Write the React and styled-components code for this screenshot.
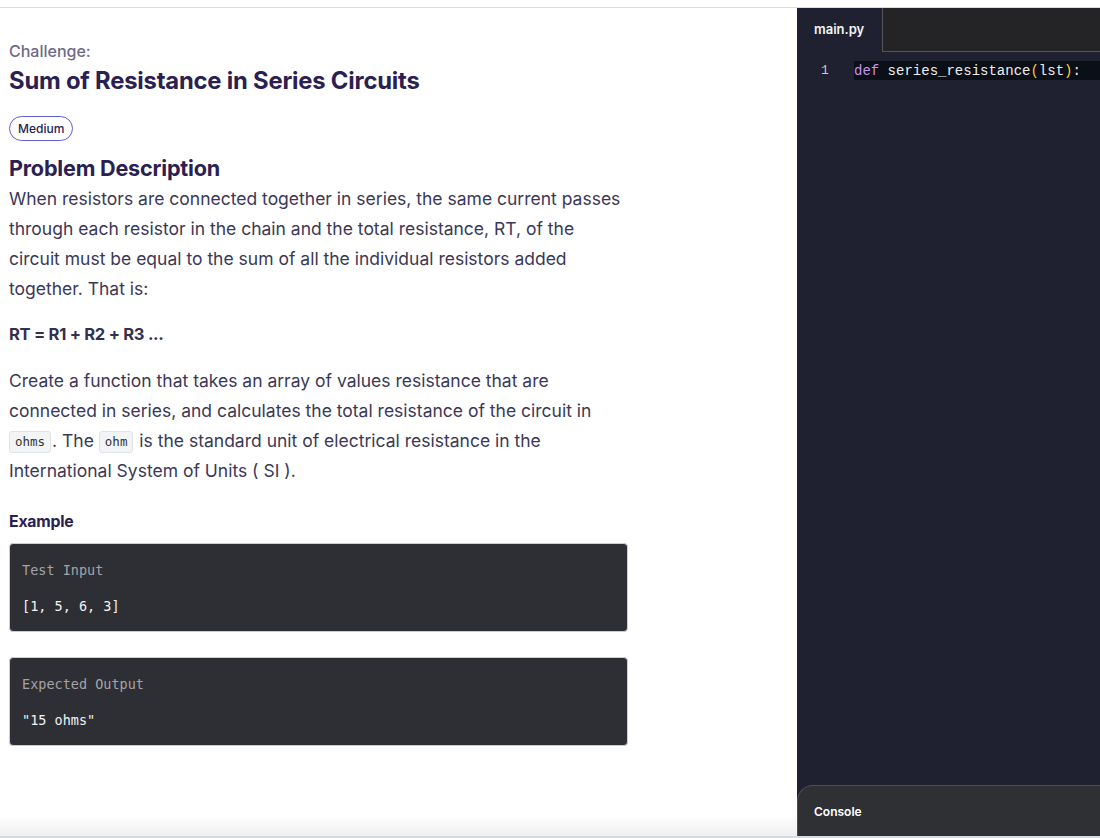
import React from "react";
import styled, { createGlobalStyle } from "styled-components";

const Global = createGlobalStyle`
  html, body { margin: 0; padding: 0; background: #fff; }
  body { font-family: Inter, "Noto Sans", sans-serif; }
  * { box-sizing: border-box; }
`;

const Page = styled.div`
  width: 1100px;
  height: 838px;
  display: flex;
  flex-direction: column;
  overflow: hidden;
`;

const TopStrip = styled.div`
  height: 8px;
  flex: none;
  border-bottom: 1px solid #d7dde3;
  background: #fff;
`;

const Main = styled.div`
  flex: 1;
  display: flex;
  min-height: 0;
`;

const BottomLine = styled.div`
  height: 2px;
  flex: none;
  background: #d3dae0;
`;

const LeftPanel = styled.section`
  width: 797px;
  flex: none;
  padding: 33px 0 0 9px;
  background: linear-gradient(to bottom, #fff calc(100% - 22px), #efefef);
`;

const Content = styled.div`
  width: 619px;
  color: #3b3857;
`;

const TextBlock = styled.div`
  width: 614px;
`;

const Kicker = styled.div`
  font-size: 16px;
  line-height: 20px;
  color: #6e6a86;
  font-weight: 500;
`;

const Title = styled.h1`
  margin: 5px 0 0;
  font-size: 23.8px;
  line-height: 30px;
  font-weight: 700;
  color: #2a2152;
  letter-spacing: -0.2px;
`;

const Badge = styled.div`
  display: flex;
  align-items: center;
  width: fit-content;
  margin-top: 20px;
  height: 25px;
  padding: 0 8px;
  border: 1px solid #5f5ce0;
  border-radius: 13px;
  font-size: 12px;
  color: #2a2152;
  font-weight: 500;
`;

const Heading = styled.h2`
  margin: 12px 0 0;
  font-size: 21.6px;
  line-height: 30px;
  font-weight: 700;
  color: #2a2152;
  letter-spacing: -0.2px;
`;

const Para = styled.p`
  margin: ${(p) => p.$mt || 0}px 0 0;
  font-size: 17.5px;
  line-height: 30px;
  color: #3b3857;
`;

const Formula = styled.p`
  margin: 15px 0 0;
  font-size: 16.6px;
  line-height: 30px;
  font-weight: 700;
  color: #34304f;
  letter-spacing: -0.3px;
`;

const Code = styled.code`
  display: inline-block;
  font-family: "DejaVu Sans Mono", "Liberation Mono", monospace;
  font-size: 12.5px;
  line-height: 20px;
  padding: 0 5px;
  margin-right: 1px;
  background: #f3f4f6;
  border: 1px solid #dfe3e8;
  border-radius: 3px;
  color: #333;
  vertical-align: 1px;
`;

const SubHeading = styled.h3`
  margin: 26px 0 0;
  font-size: 15.8px;
  line-height: 20px;
  font-weight: 700;
  color: #2a2152;
  letter-spacing: -0.2px;
`;

const ExampleBox = styled.div`
  margin-top: ${(p) => p.$mt}px;
  width: 619px;
  height: 89px;
  background: #2e2f34;
  border: 1px solid #c9ced6;
  border-radius: 4px;
  padding: 16px 12px 0;
  display: flex;
  flex-direction: column;
  gap: 16px;
  font-family: "DejaVu Sans Mono", "Liberation Mono", monospace;
  font-size: 13.5px;
  line-height: 20px;
`;

const BoxLabel = styled.div`
  color: #a3a3a6;
`;

const BoxValue = styled.div`
  color: #f2f2f2;
`;

const Editor = styled.section`
  flex: 1;
  display: flex;
  flex-direction: column;
  background: #1f2130;
  min-width: 0;
`;

const TabBar = styled.div`
  height: 44px;
  flex: none;
  display: flex;
`;

const Tab = styled.div`
  width: 85px;
  display: flex;
  align-items: center;
  padding-left: 17px;
  padding-bottom: 2px;
  font-size: 13px;
  font-weight: 600;
  color: #f4f4f6;
`;

const TabFill = styled.div`
  flex: 1;
  background: #242426;
  border-left: 1px solid #55565c;
  border-bottom: 1px solid #55565c;
`;

const CodeArea = styled.div`
  flex: 1;
  padding-top: 9px;
  font-family: "Liberation Mono", "DejaVu Sans Mono", monospace;
  font-size: 14px;
`;

const Line = styled.div`
  display: flex;
  height: 19px;
  align-items: center;
`;

const LineNo = styled.span`
  width: 57px;
  flex: none;
  padding-left: 24px;
  color: #c6c6cc;
  font-size: 13px;
`;

const LineText = styled.span`
  flex: 1;
  height: 19px;
  display: flex;
  align-items: center;
  background: #0b0f18;
  color: #eeeeee;
  white-space: pre;
`;

const Tok = styled.span`
  color: ${(p) => p.$c};
`;

const Console = styled.div`
  height: 51px;
  flex: none;
  background: #2f3034;
  border-top: 1px solid #4e4f55;
  border-left: 1px solid #4e4f55;
  border-top-left-radius: 16px;
  display: flex;
  align-items: center;
  padding-left: 16px;
  font-size: 12px;
  font-weight: 600;
  color: #ffffff;
`;

export default function App() {
  return (
    <>
      <Global />
      <Page>
        <TopStrip />
        <Main>
          <LeftPanel>
            <Content>
              <Kicker>Challenge:</Kicker>
              <Title>Sum of Resistance in Series Circuits</Title>
              <Badge>Medium</Badge>
              <Heading>Problem Description</Heading>
              <TextBlock>
                <Para $mt={1}>
                  When resistors are connected together in series, the same current passes through each
                  resistor in the chain and the total resistance, RT, of the circuit must be equal to the sum
                  of all the individual resistors added together. That is:
                </Para>
                <Formula>RT = R1 + R2 + R3 ...</Formula>
                <Para $mt={17}>
                  Create a function that takes an array of values resistance that are connected in series, and
                  calculates the total resistance of the circuit in <Code>ohms</Code>. The <Code>ohm</Code> is the
                  standard unit of electrical resistance in the International System of Units ( SI ).
                </Para>
              </TextBlock>
              <SubHeading>Example</SubHeading>
              <ExampleBox $mt={11}>
                <BoxLabel>Test Input</BoxLabel>
                <BoxValue>[1, 5, 6, 3]</BoxValue>
              </ExampleBox>
              <ExampleBox $mt={25}>
                <BoxLabel>Expected Output</BoxLabel>
                <BoxValue>"15 ohms"</BoxValue>
              </ExampleBox>
            </Content>
          </LeftPanel>
          <Editor>
            <TabBar>
              <Tab>main.py</Tab>
              <TabFill />
            </TabBar>
            <CodeArea>
              <Line>
                <LineNo>1</LineNo>
                <LineText>
                  <Tok $c="#c792ea">def</Tok> series_resistance<Tok $c="#ffcb2b">(</Tok>lst<Tok $c="#ffcb2b">)</Tok>:
                </LineText>
              </Line>
            </CodeArea>
            <Console>Console</Console>
          </Editor>
        </Main>
        <BottomLine />
      </Page>
    </>
  );
}
